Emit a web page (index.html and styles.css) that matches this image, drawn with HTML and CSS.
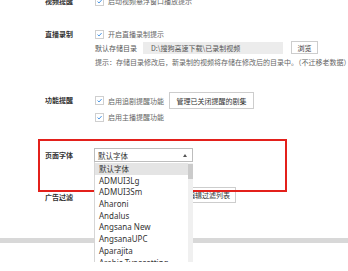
FILE: index.html
```html
<!DOCTYPE html>
<html>
<head>
    <meta charset="utf-8">
    <title>设置</title>
    <link rel="stylesheet" href="styles.css">
</head>
<body>
    <div class="window">
        <div class="settings">
            <!-- 视频提醒 -->
            <div class="row row-video">
                <div class="row-label">视频提醒</div>
                <div class="row-body">
                    <label class="check"><span class="box"><svg viewBox="0 0 9 9"><path d="M2 4.6 L3.9 6.4 L7.2 2.6"/></svg></span>启动视频悬浮窗口播放提示</label>
                </div>
            </div>

            <!-- 直播录制 -->
            <div class="row row-record">
                <div class="row-label">直播录制</div>
                <div class="row-body">
                    <label class="check"><span class="box"><svg viewBox="0 0 9 9"><path d="M2 4.6 L3.9 6.4 L7.2 2.6"/></svg></span>开启直播录制提示</label>
                    <div class="path-line">
                        <span class="path-label">默认存储目录</span>
                        <span class="path-input">D:\搜狗高速下载\已录制视频</span>
                        <button class="btn btn-browse">浏览</button>
                    </div>
                    <div class="hint">提示：存储目录修改后，新录制的视频将存储在修改后的目录中。（不迁移老数据）</div>
                </div>
            </div>

            <!-- 功能提醒 -->
            <div class="row row-remind">
                <div class="row-label">功能提醒</div>
                <div class="row-body">
                    <div class="remind-line">
                        <label class="check"><span class="box"><svg viewBox="0 0 9 9"><path d="M2 4.6 L3.9 6.4 L7.2 2.6"/></svg></span>启用追剧提醒功能</label>
                        <button class="btn btn-manage">管理已关闭提醒的剧集</button>
                    </div>
                    <label class="check check-second"><span class="box"><svg viewBox="0 0 9 9"><path d="M2 4.6 L3.9 6.4 L7.2 2.6"/></svg></span>启用主播提醒功能</label>
                </div>
            </div>

            <!-- 页面字体 -->
            <div class="row row-font">
                <div class="highlight"></div>
                <div class="row-label">页面字体</div>
                <div class="row-body">
                    <div class="select">
                        <span class="select-value">默认字体</span>
                        <span class="select-arrow"></span>
                        <ul class="dropdown">
                            <li class="active">默认字体</li>
                            <li>ADMUI3Lg</li>
                            <li>ADMUI3Sm</li>
                            <li>Aharoni</li>
                            <li>Andalus</li>
                            <li>Angsana New</li>
                            <li>AngsanaUPC</li>
                            <li>Aparajita</li>
                            <li>Arabic Typesetting</li>
                        </ul>
                        <div class="scrollbar"><div class="thumb"></div></div>
                    </div>
                </div>
            </div>

            <!-- 广告过滤 -->
            <div class="row row-ad">
                <div class="row-label">广告过滤</div>
                <div class="row-body ad-line">
                    <button class="btn btn-filter">编辑过滤列表</button>
                </div>
            </div>

            <!-- 下载设置 (cut off by the scroll bar) -->
            <div class="row row-last">
                <div class="row-label">下载设置</div>
                <div class="row-body">
                    <button class="btn btn-last">更改目录</button>
                </div>
            </div>
        </div>
    </div>
    <div class="hscroll"></div>
    <div class="bottom"></div>
</body>
</html>
```

FILE: styles.css
```css
* {
    box-sizing: border-box;
}
body {
    margin: 0;
    background: white;
    font-family: "Noto Sans CJK SC", "Noto Sans", sans-serif;
    font-size: 7px;
    color: #666;
}
.window {
    height: 243px;
}
.settings {
    padding-left: 45px;
    margin-top: -5px;
}
.row {
    display: flex;
    align-items: flex-start;
}
.row-label {
    width: 50px;
    flex: none;
    font-weight: bold;
    color: #333;
    line-height: 12px;
}
.row-body {
    display: flex;
    flex-direction: column;
}

/* checkbox */
.check {
    display: flex;
    align-items: center;
    height: 12px;
    line-height: 12px;
    white-space: nowrap;
}
.box {
    width: 9px;
    height: 9px;
    border: 1px solid #cfcfcf;
    background: white;
    margin-right: 4px;
    display: flex;
}
.box svg {
    width: 7px;
    height: 7px;
}
.box path {
    fill: none;
    stroke: #3c8fe4;
    stroke-width: 1.2;
}

.btn {
    font-family: inherit;
    font-size: 7px;
    color: #333;
    background: white;
    border: 1px solid #cdcdcd;
    padding: 0 5px;
    white-space: nowrap;
}

/* 视频提醒 */
.row-video {
    margin-bottom: 21px;
}

/* 直播录制 */
.row-record {
    margin-bottom: 24px;
}
.path-line {
    display: flex;
    align-items: center;
    margin-top: 1px;
    height: 13px;
}
.path-label {
    width: 48px;
    color: #555;
}
.path-input {
    width: 140px;
    height: 12px;
    line-height: 12px;
    background: #ececec;
    padding-left: 8px;
    color: #555;
}
.btn-browse {
    margin-left: 8px;
    width: 27px;
    height: 13px;
    padding: 0;
}
.hint {
    margin-top: 2px;
    line-height: 12px;
    white-space: nowrap;
    color: #666;
}

/* 功能提醒 */
.row-remind {
    margin-bottom: 25px;
}
.row-remind .row-label {
    line-height: 17px;
}
.remind-line {
    display: flex;
    align-items: center;
    height: 17px;
}
.btn-manage {
    margin-left: 5px;
    height: 17px;
    width: 85px;
}
.check-second {
    margin-top: 2px;
}

/* 页面字体 */
.row-font {
    position: relative;
    margin-bottom: 25px;
}
.row-font .row-label {
    line-height: 14px;
}
.highlight {
    position: absolute;
    left: -7px;
    top: -9px;
    width: 249px;
    height: 53px;
    border: 2px solid #e3201b;
    z-index: 2;
}
.select {
    position: relative;
    margin-left: -1px;
    width: 99px;
    height: 14px;
    border: 1px solid #bdbdbd;
    background: white;
    display: flex;
    align-items: center;
    padding-left: 3px;
    font-size: 7.5px;
    color: #333;
}
.select-value {
    flex: 1;
}
.select-arrow {
    width: 0;
    height: 0;
    margin-right: 5px;
    border-left: 2.5px solid transparent;
    border-right: 2.5px solid transparent;
    border-bottom: 3px solid #555;
}
.dropdown {
    position: absolute;
    left: -1px;
    top: 13px;
    width: 99px;
    height: 100px;
    margin: 0;
    padding: 1px 5px 0 0;
    list-style: none;
    background: white;
    border-left: 1px solid #d6d6d6;
    overflow: hidden;
    z-index: 3;
}
.dropdown li {
    height: 11.7px;
    line-height: 11.7px;
    padding-left: 4px;
    font-family: "Noto Sans", "Noto Sans CJK SC", sans-serif;
    font-size: 8px;
    color: #333;
    white-space: nowrap;
}
.dropdown li.active {
    background: #e4e4e4;
    font-family: "Noto Sans CJK SC", sans-serif;
    font-size: 7.5px;
}
.scrollbar {
    position: absolute;
    left: 93px;
    top: 14px;
    width: 5px;
    height: 99px;
    background: #f0f0f0;
    z-index: 4;
}
.thumb {
    height: 15px;
    margin-top: 1px;
    background: #cbcbcb;
}

/* 广告过滤 */
.row-ad {
    margin-bottom: 35px;
}
.row-ad .row-label {
    line-height: 16px;
    margin-top: 2px;
}
.ad-line {
    flex-direction: row;
    align-items: center;
    height: 16px;
}
.btn-filter {
    margin-left: 87px;
    height: 16px;
}

/* 下载设置 */
.row-last .row-label {
    line-height: 16px;
    margin-top: 4px;
}
.btn-last {
    margin-left: 98px;
    width: 34px;
    height: 16px;
    padding-top: 5px;
}

.hscroll {
    position: relative;
    z-index: 1;
    height: 5px;
    background: #d8d8d8;
}
.bottom {
    position: relative;
    z-index: 1;
    height: 23px;
    background: white;
}
```
